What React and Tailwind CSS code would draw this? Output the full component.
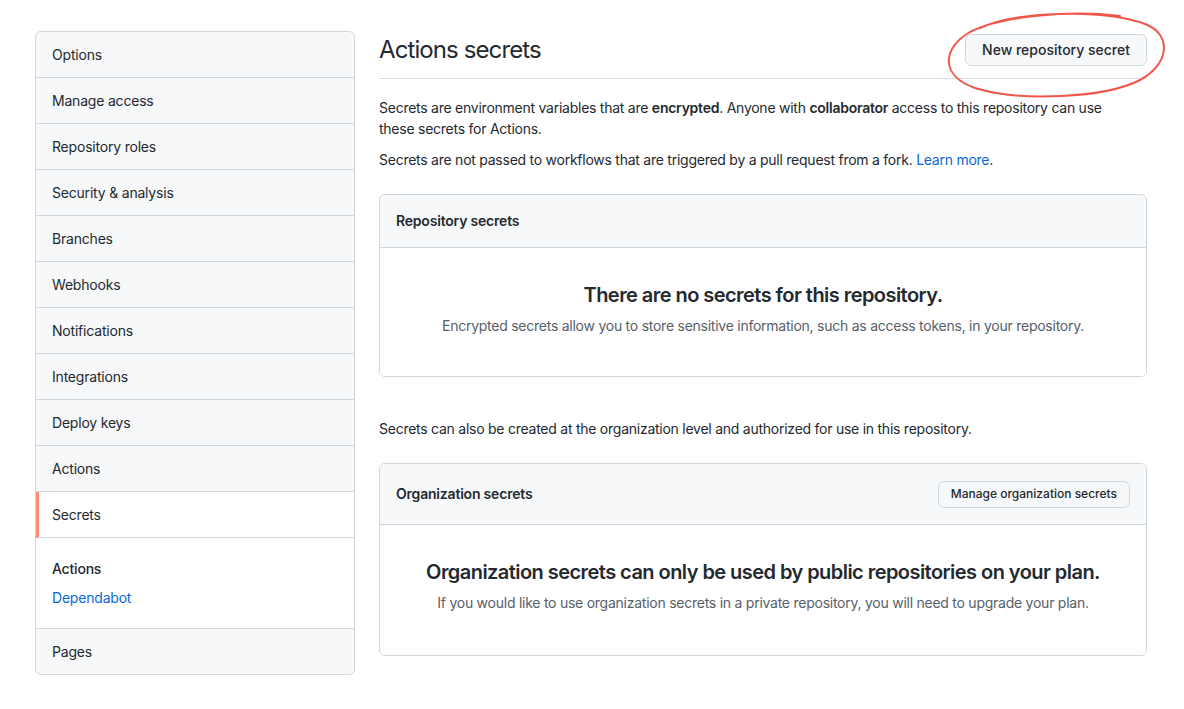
import React from 'react';

const navItems = [
  'Options',
  'Manage access',
  'Repository roles',
  'Security & analysis',
  'Branches',
  'Webhooks',
  'Notifications',
  'Integrations',
  'Deploy keys',
  'Actions',
];

function SideNav() {
  return (
    <nav className="w-[320px] shrink-0 rounded-md border border-[#d0d7de] bg-[#f6f8fa] overflow-hidden text-sm tracking-[-0.2px] text-[#24292f]">
      {navItems.map((item) => (
        <div key={item} className="h-[46px] flex items-center px-4 border-b border-[#d0d7de]">
          {item}
        </div>
      ))}
      <div className="h-[46px] flex items-center px-4 border-b border-[#d0d7de] bg-white border-l-[3px] border-l-[#fd8c73] pl-[13px]">
        Secrets
      </div>
      <div className="bg-white border-b border-[#d0d7de] px-4 pt-[21px] pb-[20px]">
        <div className="leading-5 font-medium">Actions</div>
        <div className="leading-5 mt-[9px] text-[#0969da]">Dependabot</div>
      </div>
      <div className="h-[45px] flex items-center px-4">Pages</div>
    </nav>
  );
}

function Box({ title, action, children, headerClass }) {
  return (
    <div className="rounded-md border border-[#d0d7de] overflow-hidden">
      <div className={`bg-[#f6f8fa] border-b border-[#d0d7de] px-4 flex items-center justify-between ${headerClass}`}>
        <h3 className="text-sm font-semibold tracking-[-0.2px] text-[#24292f]">{title}</h3>
        {action}
      </div>
      {children}
    </div>
  );
}

function Blank({ title, text, bottom }) {
  return (
    <div className={`bg-white flex flex-col items-center text-center pt-[32px] ${bottom}`}>
      <h3 className="text-[20px] leading-[30px] font-semibold tracking-[-0.55px] text-[#24292f]">{title}</h3>
      <p className="text-sm leading-[21px] tracking-[-0.25px] text-[#57606a] mt-[5px]">{text}</p>
    </div>
  );
}

export default function App() {
  return (
    <div
      className="relative w-[1184px] h-[709px] bg-white text-[#24292f] overflow-hidden"
      style={{ fontFamily: 'Inter, "Liberation Sans", Arial, sans-serif' }}
    >
      <div className="flex gap-6 pl-[35px] pr-[37px] pt-[31px]">
        <SideNav />
        <main className="flex-1 min-w-0">
          <div className="flex items-center justify-between border-b border-[#d8dee4] pb-[12px] pt-[3px]">
            <h2 className="text-2xl font-normal leading-[32px] tracking-[-0.9px]">Actions secrets</h2>
            <button className="h-[32px] px-4 rounded-md border border-[#d0d7de] bg-[#f6f8fa] text-sm font-medium text-[#24292f]">
              New repository secret
            </button>
          </div>
          <div className="text-sm leading-[21px] tracking-[-0.25px]">
            <p className="mt-[18px]">
              Secrets are environment variables that are <b className="font-semibold">encrypted</b>. Anyone with{' '}
              <b className="font-semibold">collaborator</b> access to this repository can use
              <br />
              these secrets for Actions.
            </p>
            <p className="mt-[10px]">
              Secrets are not passed to workflows that are triggered by a pull request from a fork.{' '}
              <span className="text-[#0969da]">Learn more</span>.
            </p>
          </div>

          <div className="mt-[24px]">
            <Box title="Repository secrets" headerClass="h-[53px]">
              <Blank
                title="There are no secrets for this repository."
                text="Encrypted secrets allow you to store sensitive information, such as access tokens, in your repository."
                bottom="pb-[40px]"
              />
            </Box>
          </div>

          <p className="text-sm leading-[21px] tracking-[-0.25px] mt-[41px]">
            Secrets can also be created at the organization level and authorized for use in this repository.
          </p>

          <div className="mt-[24px]">
            <Box
              title="Organization secrets"
              headerClass="h-[61px]"
              action={
                <button className="h-[27px] px-3 rounded-md border border-[#d0d7de] bg-[#f6f8fa] text-xs font-medium text-[#24292f]">
                  Manage organization secrets
                </button>
              }
            >
              <Blank
                title="Organization secrets can only be used by public repositories on your plan."
                text="If you would like to use organization secrets in a private repository, you will need to upgrade your plan."
                bottom="pb-[42px]"
              />
            </Box>
          </div>
        </main>
      </div>

      <svg className="absolute left-[940px] top-[6px] pointer-events-none" width="232" height="100" viewBox="0 0 232 100">
        <path
          d="M40 22 C 75 6, 160 2, 205 18 C 232 28, 230 58, 200 74 C 165 92, 80 96, 35 82 C 0 70, 2 42, 30 26 C 60 10, 130 4, 180 10"
          fill="none"
          stroke="#f0564a"
          strokeWidth="2"
          strokeLinecap="round"
        />
      </svg>
    </div>
  );
}
